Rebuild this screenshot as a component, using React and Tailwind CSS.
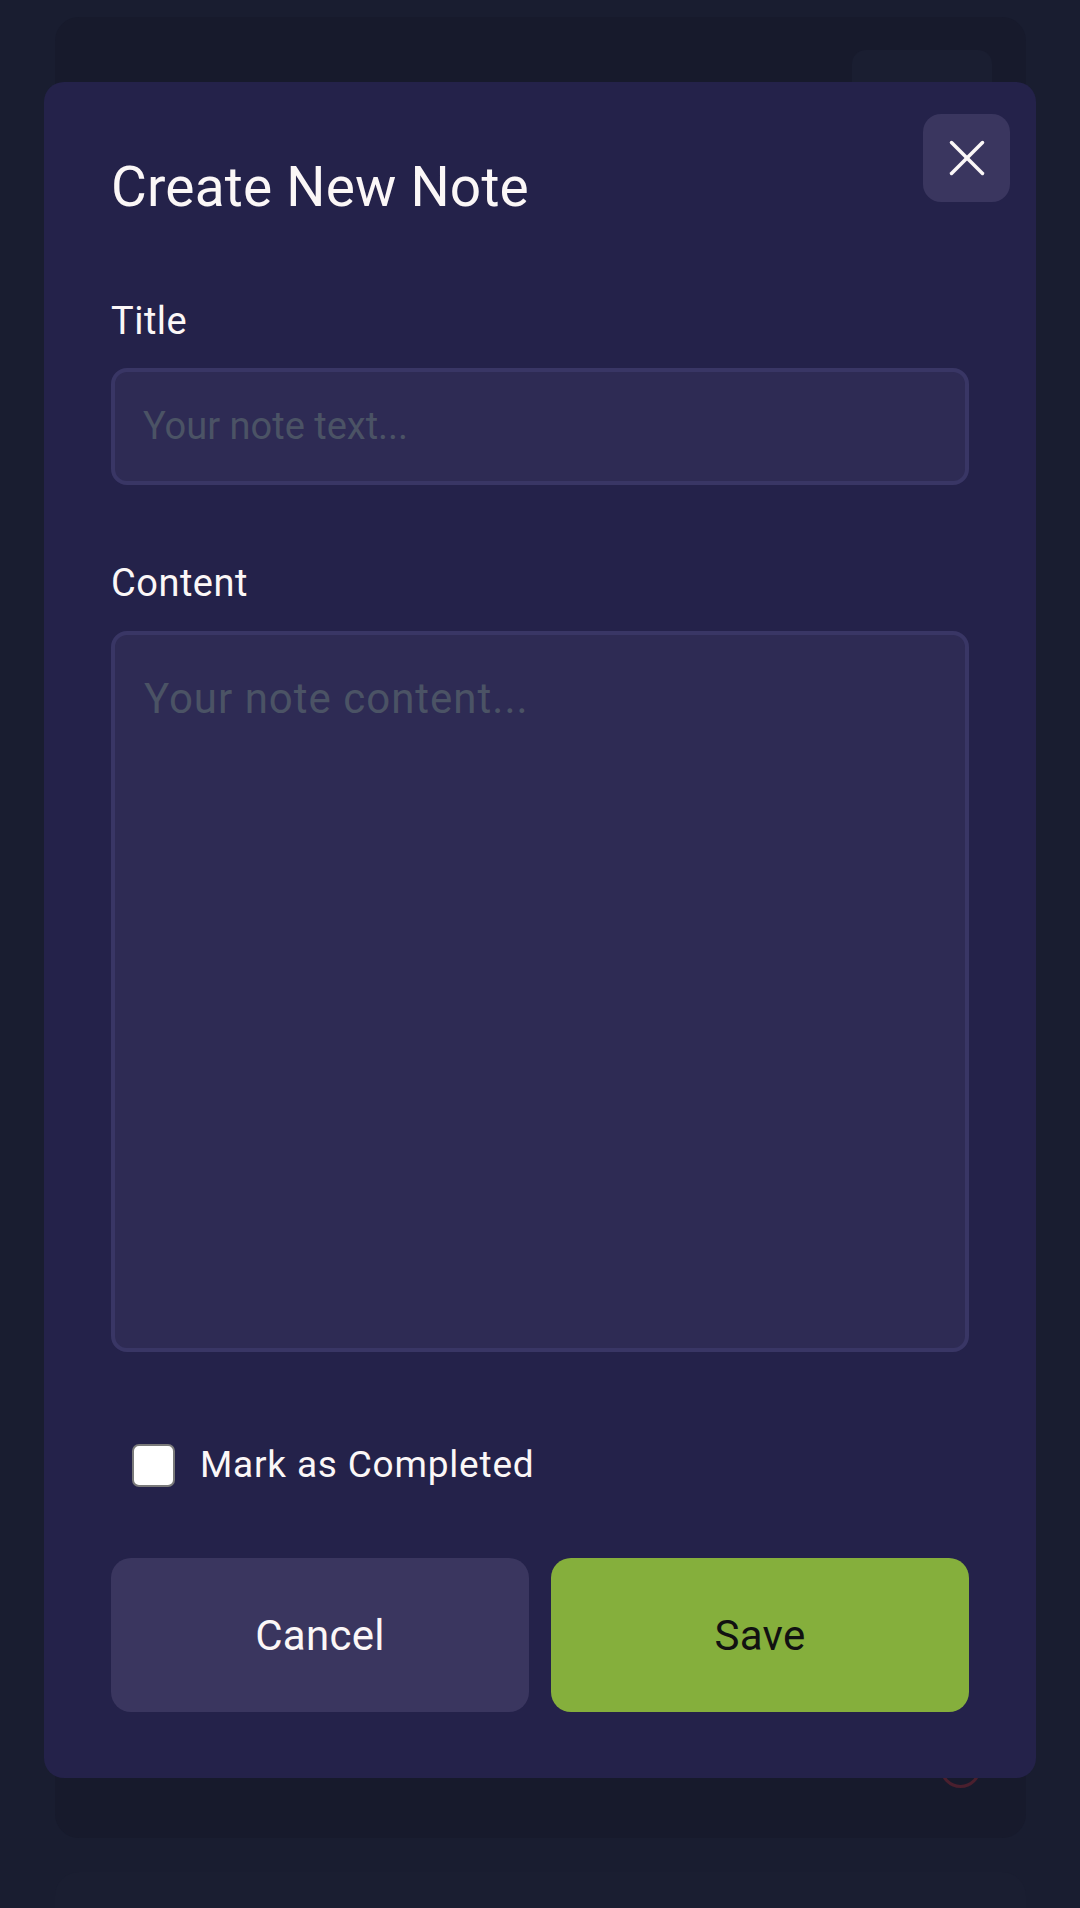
import React from "react";

export default function App() {
  return (
    <div className="relative min-h-[1908px] w-[1080px] overflow-hidden bg-[#191d30] font-['Roboto',sans-serif]">
      {/* background page */}
      <div className="flex flex-col gap-[34px] pl-[55px] pr-[54px] pt-[17px]">
        <div className="flex h-[1821px] flex-col rounded-[24px] bg-[#171a2c]">
          <div className="flex justify-end pr-[34px] pt-[33px]">
            <div className="h-[60px] w-[140px] rounded-[14px] bg-[#1a1e31]" />
          </div>
          <div className="flex-1" />
          <div className="flex justify-end pb-[50px] pr-[45px]">
            <div className="h-[41px] w-[41px] rounded-full border-[3px] border-[#4a1f2e]" />
          </div>
        </div>
        <div className="h-[120px] rounded-[24px] bg-[#1a1e31]" />
      </div>

      {/* modal overlay */}
      <div className="absolute inset-0 flex items-start justify-center pt-[82px]">
        <div className="relative flex w-[992px] flex-col rounded-[20px] bg-[#24224a] px-[67px] pb-[66px] pt-[72px] text-[#fbf7f7]">
          <button className="absolute right-[26px] top-[32px] flex h-[88px] w-[87px] items-center justify-center rounded-[18px] bg-[#3a365f]">
            <svg width="36" height="36" viewBox="0 0 36 36" fill="none" stroke="#fbf7f7" strokeWidth="3.5" strokeLinecap="round">
              <line x1="2.5" y1="2.5" x2="33.5" y2="33.5" />
              <line x1="33.5" y1="2.5" x2="2.5" y2="33.5" />
            </svg>
          </button>

          <h2 className="text-[55px] font-normal leading-[66px] tracking-[0.2px]">Create New Note</h2>

          <label className="mt-[78px] text-[38px] leading-[46px] tracking-[0.5px]">Title</label>
          <div className="mt-[24px] flex h-[117px] shrink-0 items-center rounded-[16px] border-[4px] border-[#393665] bg-[#2e2b54] px-[28px]">
            <span className="text-[38px] text-[#4b5365]">Your note text...</span>
          </div>

          <label className="mt-[75px] text-[38px] leading-[46px] tracking-[0.5px]">Content</label>
          <div className="mt-[25px] h-[721px] shrink-0 rounded-[16px] border-[4px] border-[#393665] bg-[#2e2b54] px-[29px] pt-[34px]">
            <span className="text-[42px] leading-[60px] tracking-[1px] text-[#4b5365]">Your note content...</span>
          </div>

          <div className="mt-[90px] flex items-center gap-[25px] pl-[21px]">
            <div className="h-[43px] w-[43px] rounded-[7px] border-[2px] border-[#7a7a7a] bg-white" />
            <span className="text-[37px] leading-[46px] tracking-[0.8px]">Mark as Completed</span>
          </div>

          <div className="mt-[70px] flex gap-[22px]">
            <button className="flex h-[154px] flex-1 items-center justify-center rounded-[20px] bg-[#3a365f] text-[42px] tracking-[0.3px] text-[#fbf7f7]">
              Cancel
            </button>
            <button className="flex h-[154px] flex-1 items-center justify-center rounded-[20px] bg-[#85af3c] text-[42px] tracking-[0.3px] text-[#111111]">
              Save
            </button>
          </div>
        </div>
      </div>
    </div>
  );
}
